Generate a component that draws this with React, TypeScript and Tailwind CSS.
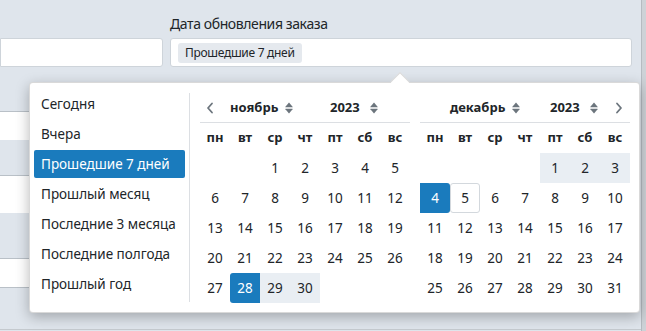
import React from 'react';

type Mark = 'start' | 'end' | 'range' | 'today' | null;

const presets = [
  'Сегодня',
  'Вчера',
  'Прошедшие 7 дней',
  'Прошлый месяц',
  'Последние 3 месяца',
  'Последние полгода',
  'Прошлый год',
];

const weekdays = ['пн', 'вт', 'ср', 'чт', 'пт', 'сб', 'вс'];

// build a month grid starting on Monday
const buildDays = (offset: number, total: number) => {
  const cells: (number | null)[] = [];
  for (let i = 0; i < offset; i++) cells.push(null);
  for (let d = 1; d <= total; d++) cells.push(d);
  return cells;
};

const SortIcon = () => (
  <svg width="8" height="12" viewBox="0 0 8 12" className="fill-[#6c757d]">
    <path d="M4 0.5 L7.6 4.8 Q8 5.3 7.3 5.3 H0.7 Q0 5.3 0.4 4.8 Z" />
    <path d="M4 11.5 L7.6 7.2 Q8 6.7 7.3 6.7 H0.7 Q0 6.7 0.4 7.2 Z" />
  </svg>
);

const Chevron = ({ dir }: { dir: 'left' | 'right' }) => (
  <svg width="8" height="12" viewBox="0 0 8 12" fill="none" className="stroke-[#6c757d]">
    <path d={dir === 'left' ? 'M6 1.5 L2 6 L6 10.5' : 'M2 1.5 L6 6 L2 10.5'} strokeWidth="1.8" strokeLinecap="round" strokeLinejoin="round" />
  </svg>
);

const DayCell: React.FC<{ day: number | null; mark: Mark }> = ({ day, mark }) => {
  let cls = 'text-[#212529]';
  if (mark === 'start') cls = 'bg-[#1a7bbd] text-white rounded-l-[3px]';
  if (mark === 'end') cls = 'bg-[#1a7bbd] text-white rounded-r-[3px]';
  if (mark === 'range') cls = 'bg-[#e9eef3] text-[#212529]';
  if (mark === 'today') cls = 'border border-[#d3d8dd] rounded-[3px] text-[#212529]';
  return (
    <div className={`h-[30px] flex items-center justify-center text-[13.5px] ${cls}`}>
      {day ?? ''}
    </div>
  );
};

const Calendar: React.FC<{
  month: string;
  offset: number;
  total: number;
  markFor: (d: number) => Mark;
  prev?: boolean;
  next?: boolean;
}> = ({ month, offset, total, markFor, prev, next }) => (
  <div className="w-[210px]">
    <div className="h-[30px] flex items-center border-b border-[#dcdfe3]">
      <div className="w-[30px] flex pl-[6px]">{prev && <Chevron dir="left" />}</div>
      <div className="w-[100px] flex items-center gap-[7px] font-bold text-[13px] text-[#212529]">
        {month}
        <SortIcon />
      </div>
      <div className="flex items-center gap-[10px] font-bold text-[13px] text-[#212529]">
        2023
        <SortIcon />
      </div>
      <div className="ml-auto pr-[7px] flex">{next && <Chevron dir="right" />}</div>
    </div>
    <div className="grid grid-cols-7">
      {weekdays.map((w) => (
        <div key={w} className="h-[30px] flex items-center justify-center text-[13px] font-bold text-[#212529]">
          {w}
        </div>
      ))}
      {buildDays(offset, total).map((d, i) => (
        <DayCell key={i} day={d} mark={d ? markFor(d) : null} />
      ))}
    </div>
  </div>
);

const App: React.FC = () => {
  return (
    <div className="relative h-[331px] w-[646px] overflow-hidden bg-[#dfe5ec] font-['Noto_Sans',sans-serif] flex">
      <div className="flex-1 pr-[9px]">
        {/* filter row */}
        <div className="grid grid-cols-[163px_1fr] gap-x-[7px] pt-[14px]">
          <div />
          <div className="h-5 text-[14px] leading-5 tracking-[-0.4px] text-[#212529]">Дата обновления заказа</div>
          <div className="mt-[4px] h-[29px] bg-white border border-[#ced4da] rounded-r-[3px]" />
          <div className="mt-[4px] h-[29px] bg-white border border-[#ced4da] rounded-[3px] flex items-center px-[7px]">
            <span className="h-[20px] px-[7px] rounded-[3px] bg-[#e5e9ee] text-[12px] leading-5 tracking-[-0.3px] text-[#212529]">
              Прошедшие 7 дней
            </span>
          </div>
        </div>

        {/* rows behind the popup */}
        <div className="mt-[44px] w-[163px] flex flex-col">
          <div className="h-[29px] bg-white border-t border-[#b9c0c7]" />
          <div className="h-[35px]" />
          <div className="h-[38px] bg-white border-t border-[#b9c0c7]" />
          <div className="h-[45px]" />
          <div className="h-[30px] bg-white border-y border-[#b9c0c7]" />
        </div>
      </div>
      <div className="w-[5px] bg-[#cdd2d7] border-l border-[#b5bbc1]" />

      <div className="absolute bottom-[1px] left-0 right-[5px] h-px bg-[#c4c9ce]" />

      {/* date range popup */}
      <div className="absolute left-[29px] top-[82px] w-[611px] h-[231px] bg-white border border-black/15 rounded-[4px] shadow-[0_4px_14px_rgba(0,0,0,0.28)] flex">
        <div className="absolute left-[363px] top-[-8px] w-[14px] h-[14px] bg-white border-l border-t border-black/15 rotate-45" />

        <div className="w-[159px] pt-[7px] px-[4px] flex flex-col gap-[2px]">
          {presets.map((p, i) => (
            <div
              key={p}
              className={`h-[28px] flex items-center pl-[7px] rounded-[2px] text-[13.5px] ${
                i === 2 ? 'bg-[#1a7bbd] text-white' : 'text-[#212529]'
              }`}
            >
              {p}
            </div>
          ))}
        </div>

        <div className="my-[10px] w-px bg-[#dcdfe3]" />

        <div className="relative flex gap-[10px] pl-[10px] pt-[10px]">
          <Calendar
            month="ноябрь"
            offset={2}
            total={30}
            prev
            markFor={(d) => (d === 28 ? 'start' : d > 28 ? 'range' : null)}
          />
          <Calendar
            month="декабрь"
            offset={4}
            total={31}
            next
            markFor={(d) => (d === 4 ? 'end' : d < 4 ? 'range' : d === 5 ? 'today' : null)}
          />
        </div>
      </div>
    </div>
  );
};

export default App;
